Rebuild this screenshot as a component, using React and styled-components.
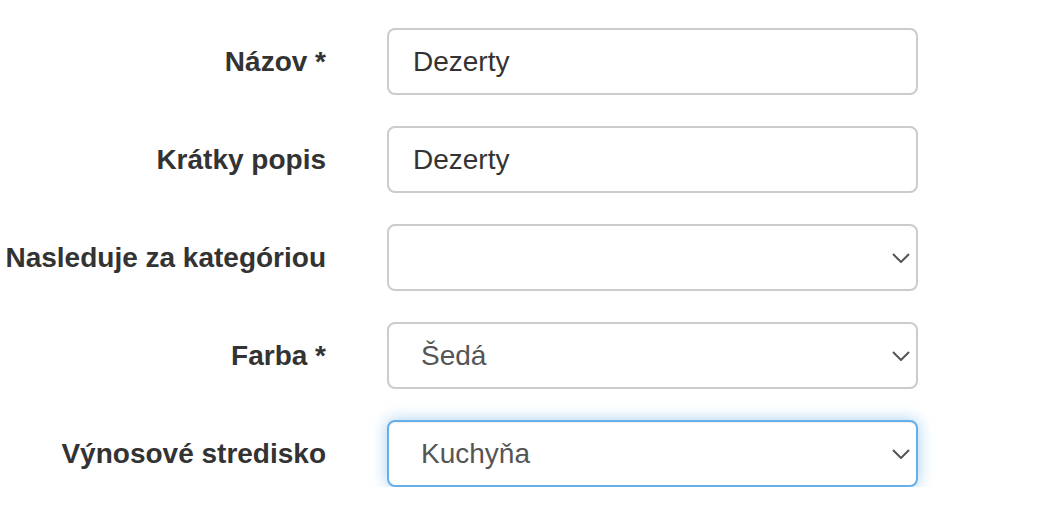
import styled, { createGlobalStyle, css } from 'styled-components';

const GlobalStyle = createGlobalStyle`
  html, body {
    margin: 0;
    padding: 0;
    background: #fff;
    font-family: "Liberation Sans", Arial, sans-serif;
  }
`;

const fields = [
  { label: 'Názov *', type: 'input', value: 'Dezerty' },
  { label: 'Krátky popis', type: 'input', value: 'Dezerty' },
  { label: 'Nasleduje za kategóriou', type: 'select', value: '' },
  { label: 'Farba *', type: 'select', value: 'Šedá' },
  { label: 'Výnosové stredisko', type: 'select', value: 'Kuchyňa', focused: true },
];

function App() {
  return (
    <>
      <GlobalStyle />
      <Form>
        {fields.map((f, idx) => (
          <Row key={idx}>
            <Label>{f.label}</Label>
            {f.type === 'input' ? (
              <Input defaultValue={f.value} />
            ) : (
              <SelectWrap>
                <Select defaultValue={f.value} $focused={f.focused}>
                  <option value={f.value}>{f.value}</option>
                </Select>
                <Chevron width="18" height="10" viewBox="0 0 18 10">
                  <path d="M1 1 L9 9 L17 1" fill="none" stroke="#555" strokeWidth="2" />
                </Chevron>
              </SelectWrap>
            )}
          </Row>
        ))}
      </Form>
    </>
  );
}

const Form = styled.form`
  display: flex;
  flex-direction: column;
  gap: 31px;
  padding-top: 28px;
`;

const Row = styled.div`
  display: grid;
  grid-template-columns: 326px 531px;
  column-gap: 61px;
  align-items: center;
`;

const Label = styled.label`
  text-align: right;
  font-size: 28px;
  font-weight: bold;
  color: #333;
`;

const control = css`
  box-sizing: border-box;
  width: 100%;
  height: 67px;
  border: 2px solid #ccc;
  border-radius: 8px;
  background: #fff;
  font-family: "Liberation Sans", Arial, sans-serif;
  font-size: 28px;
  outline: none;
  margin: 0;
`;

const Input = styled.input`
  ${control}
  padding: 0 24px;
  color: #333;
`;

const SelectWrap = styled.div`
  position: relative;
`;

const Select = styled.select`
  ${control}
  appearance: none;
  padding: 0 32px;
  color: #555;
  ${(p) =>
    p.$focused &&
    css`
      border-color: #66afe9;
      box-shadow: inset 0 1px 1px rgba(0, 0, 0, 0.075), 0 0 16px rgba(102, 175, 233, 0.6);
    `}
`;

const Chevron = styled.svg`
  position: absolute;
  right: 8px;
  top: 29px;
  pointer-events: none;
`;

export default App;
